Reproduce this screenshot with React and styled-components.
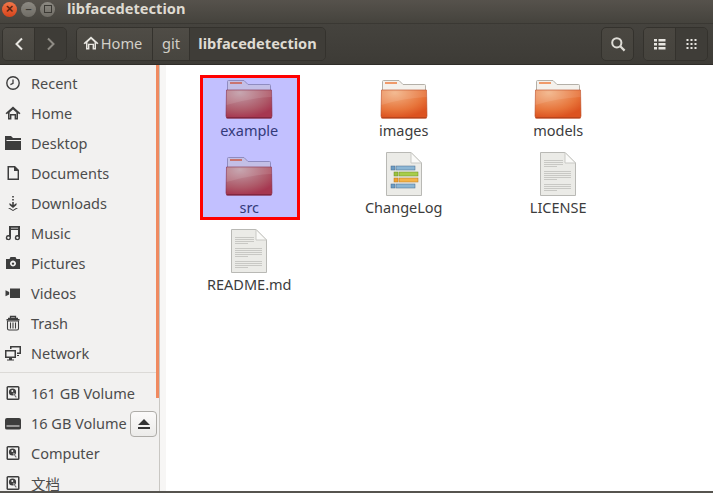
import React from 'react'
import styled, { createGlobalStyle } from 'styled-components'

const Global = createGlobalStyle`
  html, body { margin: 0; padding: 0; background: #fff; }
  body { font-family: "Noto Sans", "Open Sans", "Noto Sans CJK SC", sans-serif; }
`

const Glyphs = {
  recent: <><circle cx="8" cy="8" r="6.2" fill="none" stroke="#3d3d3d" strokeWidth="1.4" /><path d="M8 4.5V8.4L5.4 9.6" fill="none" stroke="#3d3d3d" strokeWidth="1.3" /></>,
  home: <path d="M8 1.5 15.5 8.2 14.2 9.2 13 8.2V14.5H9.6V10.5H6.4V14.5H3V8.2L1.8 9.2.5 8.2ZM8 4.4 4.6 7.4V12.9H5V9H11V12.9H11.4V7.4Z" fill="#3d3d3d" fillRule="evenodd" />,
  desktop: <path d="M0 1H6L8 3H16V15H0ZM1.5 5H16V6H1.5Z" fill="#3d3d3d" fillRule="evenodd" />,
  documents: <path d="M2.5 1H10L14 5V15H2.5ZM4 2.6V13.5H12.6V6H9V2.6Z" fill="#3d3d3d" fillRule="evenodd" />,
  downloads: <path d="M7.2 1H8.8V2.6H7.2ZM7.2 4H8.8V5.6H7.2ZM7.2 7H8.8V10L11.5 8V10L8 13 4.5 10V8L7.2 10ZM3 13H5L8 15H8L11 13H13L8 16Z" fill="#3d3d3d" />,
  music: <path d="M4 1H15V12.5A2.6 2.6 0 1 1 13 10V5H6V12.5A2.6 2.6 0 1 1 4 10ZM6 2.8V3.6H13V2.8ZM3.4 11.5A1.2 1.2 0 1 0 3.41 11.5ZM12.4 11.5A1.2 1.2 0 1 0 12.41 11.5Z" fill="#3d3d3d" fillRule="evenodd" />,
  pictures: <path d="M1 4H4.5L5.5 2H10.5L11.5 4H15V14H1ZM8 5.5A3 3 0 1 0 8.01 5.5ZM8 7.4A1.2 1.2 0 1 1 7.99 7.4Z" fill="#3d3d3d" fillRule="evenodd" />,
  videos: <path d="M5 3.5H15V13H5ZM.5 5.2 4.2 7V9.5L.5 11.3Z" fill="#3d3d3d" />,
  trash: <><path d="M3 3.5H13M5.5 3V1.5H10.5V3" fill="none" stroke="#3d3d3d" strokeWidth="1.3" /><rect x="1.5" y="4" width="13" height="1.5" fill="#3d3d3d" /><path d="M2.5 6H13.5V13.5Q13.5 15 12 15H4Q2.5 15 2.5 13.5ZM5.5 7.5V13.5M8 7.5V13.5M10.5 7.5V13.5" fill="none" stroke="#3d3d3d" strokeWidth="1.1" /></>,
  network: <path d="M0 5H11V13H7V14.5H9V15.5H2V14.5H4V13H0ZM1.5 6.5V11.5H9.5V6.5ZM5 1H16V9H12V7.5H14.5V2.5H6.5V4H5ZM12 10H14V11H12Z" fill="#3d3d3d" fillRule="evenodd" />,
  disk: <><rect x="1.5" y="1" width="13" height="14" rx="1.5" fill="#3d3d3d" /><rect x="3" y="2.5" width="10" height="11" fill="#f2f1f0" /><circle cx="7.5" cy="7" r="3.6" fill="#3d3d3d" /><circle cx="7.3" cy="6" r="1" fill="#f2f1f0" /><path d="M8 8.5 10.5 12.5H12L9 8Z" fill="#3d3d3d" stroke="#f2f1f0" strokeWidth=".5" /></>,
  drive: <path d="M2 3H14Q16 3 16 5V13Q16 14.5 14 14.5H2Q0 14.5 0 13V5Q0 3 2 3ZM1.5 10.5V11.5H14.5V10.5Z" fill="#3d3d3d" fillRule="evenodd" />,
}

const places = [
  ['recent', 'Recent'],
  ['home', 'Home'],
  ['desktop', 'Desktop'],
  ['documents', 'Documents'],
  ['downloads', 'Downloads'],
  ['music', 'Music'],
  ['pictures', 'Pictures'],
  ['videos', 'Videos'],
  ['trash', 'Trash'],
  ['network', 'Network'],
]

const volumes = [
  ['disk', '161 GB Volume'],
  ['drive', '16 GB Volume', true],
  ['disk', 'Computer'],
  ['disk', '文档'],
]

const files = [
  ['folder', 'example', true],
  ['orange', 'images'],
  ['orange', 'models'],
  ['folder', 'src', true],
  ['log', 'ChangeLog'],
  ['text', 'LICENSE'],
  ['text', 'README.md'],
]

function FolderIcon({ kind, id }) {
  const top = kind === 'folder' ? '#c3bfe6' : '#f4f1ec'
  const edge = kind === 'folder' ? '#8f8cc0' : '#b4b0a8'
  const tag = kind === 'folder' ? '#c9746f' : '#f09a6a'
  const c1 = kind === 'folder' ? '#c19da8' : '#f2b386'
  const c2 = kind === 'folder' ? '#ae5a69' : '#e7743a'
  const c3 = kind === 'folder' ? '#a63750' : '#dc5320'
  const line = kind === 'folder' ? '#83273f' : '#b9451c'
  return (
    <svg width="48" height="42" viewBox="0 0 48 42">
      <defs>
        <radialGradient id={id} cx="0.3" cy="0.1" r="0.9">
          <stop offset="0" stopColor={c1} />
          <stop offset="0.7" stopColor={c2} />
          <stop offset="1" stopColor={c3} />
        </radialGradient>
      </defs>
      <path d="M2.5 14V3.5Q2.5 2.5 3.5 2.5H19L23 6.5H44.5Q45.5 6.5 45.5 7.5V14" fill={top} stroke={edge} />
      <rect x="5" y="4" width="12" height="2" fill={tag} />
      <path d="M1.5 12H46.5L47 38Q47 40 45 40H3Q1 40 1 38Z" fill={`url(#${id})`} stroke={line} strokeWidth=".6" />
      <path d="M1.5 27Q24 20 46.8 19V12H1.5Z" fill="#fff" opacity=".1" />
      <rect x="1.5" y="39" width="45" height="1.5" fill={line} />
    </svg>
  )
}

function PageIcon({ kind }) {
  const textRows = [5, 7, 9, 11, 16, 18, 20, 22, 24, 29, 31, 33, 35]
  return (
    <svg width="38" height="46" viewBox="0 0 38 46">
      <path d="M1.5 1.5H26L36.5 12V44.5H1.5Z" fill="#ebebe7" stroke="#b9b9b5" />
      <path d="M26 1.5V12H36.5Z" fill="#fafaf8" stroke="#c9c9c5" />
      {kind === 'text' && textRows.map((y) => (
        <rect key={y} x="5" y={y + 4} width={y === 11 || y === 24 || y === 35 ? 13 : y < 10 ? 19 : 27} height="1" fill="#c8c8c4" />
      ))}
      {kind === 'log' && (
        <>
          <rect x="6" y="15" width="4" height="4" fill="#6d9dc4" stroke="#44688a" strokeWidth=".5" />
          <rect x="11" y="15" width="19" height="4" fill="#8cb6d4" stroke="#44688a" strokeWidth=".5" />
          <rect x="9" y="21" width="4" height="4" fill="#9ac13e" stroke="#6b8c22" strokeWidth=".5" />
          <rect x="14" y="21" width="19" height="4" fill="#a8cd4b" stroke="#6b8c22" strokeWidth=".5" />
          <rect x="9" y="27" width="4" height="4" fill="#f0a030" stroke="#b5741a" strokeWidth=".5" />
          <rect x="14" y="27" width="19" height="4" fill="#f4b348" stroke="#b5741a" strokeWidth=".5" />
          <rect x="6" y="33" width="4" height="4" fill="#6d9dc4" stroke="#44688a" strokeWidth=".5" />
          <rect x="11" y="33" width="19" height="4" fill="#8cb6d4" stroke="#44688a" strokeWidth=".5" />
        </>
      )}
    </svg>
  )
}

function Glyph({ name, size = 16 }) {
  return <svg width={size} height={size} viewBox="0 0 16 16">{Glyphs[name]}</svg>
}

export default function App() {
  return (
    <Window>
      <Global />
      <TitleBar>
        <WinButtons>
          <CloseBtn>×</CloseBtn>
          <WinBtn>–</WinBtn>
          <WinBtn><Square /></WinBtn>
        </WinButtons>
        <Title>libfacedetection</Title>
      </TitleBar>
      <Toolbar>
        <Group>
          <NavBtn>
            <svg width="10" height="14" viewBox="0 0 10 14"><path d="M8 1.5 2.5 7 8 12.5" fill="none" stroke="#e8e6e1" strokeWidth="2" /></svg>
          </NavBtn>
          <NavBtn $dim>
            <svg width="10" height="14" viewBox="0 0 10 14"><path d="M2 1.5 7.5 7 2 12.5" fill="none" stroke="#8f8c85" strokeWidth="2" /></svg>
          </NavBtn>
        </Group>
        <Path>
          <Crumb $w={75}>
            <HomeIcon width="16" height="14" viewBox="0 0 16 14"><path d="M8 .5 15.5 7.2 14.2 8.3 13 7.3V13.5H9.6V9H6.4V13.5H3V7.3L1.8 8.3.5 7.2ZM8 3 4.5 6.2V12H5V7.8H11V12H11.5V6.2Z" fill="#e8e6e1" fillRule="evenodd" /></HomeIcon>
            Home
          </Crumb>
          <Crumb $w={37}>git</Crumb>
          <Crumb $w={136} $current>libfacedetection</Crumb>
        </Path>
        <Spacer />
        <SearchBtn>
          <svg width="16" height="16" viewBox="0 0 16 16"><circle cx="6.8" cy="6.8" r="4.6" fill="none" stroke="#dedcd6" strokeWidth="2" /><path d="M10 10 14.6 14.6" stroke="#dedcd6" strokeWidth="2.2" /></svg>
        </SearchBtn>
        <ViewGroup>
          <ViewBtn>
            <svg width="12" height="12" viewBox="0 0 12 12" fill="#e8e6e1"><rect y="1" width="3" height="2.5" /><rect x="4.5" y="1" width="7" height="2.5" /><rect y="5" width="3" height="2.5" /><rect x="4.5" y="5" width="7" height="2.5" /><rect y="9" width="3" height="2.5" /><rect x="4.5" y="9" width="7" height="2.5" /></svg>
          </ViewBtn>
          <ViewBtn $on>
            <svg width="12" height="12" viewBox="0 0 12 12" fill="#e8e6e1">
              {[1, 5, 9].map((y) => [1, 5, 9].map((x) => <rect key={`${x}-${y}`} x={x - 0.5} y={y} width="2" height="2" />))}
            </svg>
          </ViewBtn>
        </ViewGroup>
      </Toolbar>
      <Body>
        <Sidebar>
          <PlaceList>
            {places.map(([icon, label]) => (
              <Place key={label}>
                <Glyph name={icon} />
                <PlaceLabel>{label}</PlaceLabel>
              </Place>
            ))}
          </PlaceList>
          <Divider />
          <VolumeList>
            {volumes.map(([icon, label, eject]) => (
              <Place key={label}>
                <Glyph name={icon} />
                <PlaceLabel>{label}</PlaceLabel>
                {eject && (
                  <EjectBtn>
                    <svg width="14" height="12" viewBox="0 0 14 12"><path d="M7 1 13 7H1Z M1 9H13V11H1Z" fill="#333" /></svg>
                  </EjectBtn>
                )}
              </Place>
            ))}
          </VolumeList>
          <Scroll />
        </Sidebar>
        <Gutter />
        <Content>
          <Grid>
            {files.map(([kind, label, selected]) => (
              <File key={label}>
                <IconSlot>
                  {kind === 'log' || kind === 'text'
                    ? <PageIcon kind={kind} />
                    : <FolderIcon kind={kind} id={`grad-${label}`} />}
                </IconSlot>
                <FileLabel $selected={selected}>{label}</FileLabel>
              </File>
            ))}
          </Grid>
          <Selection />
        </Content>
      </Body>
      <BottomEdge />
    </Window>
  )
}

const Window = styled.div`
  width: 713px;
  height: 493px;
  display: flex;
  flex-direction: column;
  overflow: hidden;
  position: relative;
`
const TitleBar = styled.div`
  height: 23px;
  flex: none;
  box-sizing: border-box;
  padding-bottom: 5px;
  display: flex;
  align-items: center;
  background: linear-gradient(#56524c, #45433d);
`
const WinButtons = styled.div`
  display: flex;
  gap: 4px;
  padding-left: 2px;
  width: 65px;
  box-sizing: border-box;
`
const WinBtn = styled.div`
  width: 15px;
  height: 15px;
  border-radius: 50%;
  background: linear-gradient(#8d8a83, #6f6c65);
  color: #3b3934;
  font: bold 11px/14px "Liberation Sans", sans-serif;
  display: flex;
  align-items: center;
  justify-content: center;
`
const CloseBtn = styled(WinBtn)`
  background: linear-gradient(#f2774a, #d6441c);
  color: #5a2410;
  font-size: 13px;
`
const Square = styled.div`
  width: 6px;
  height: 6px;
  border: 1px solid #3b3934;
`
const Title = styled.div`
  padding-left: 2px;
  margin-bottom: 2px;
  color: #dfdbd2;
  font-size: 14.6px;
  font-weight: 700;
  line-height: 16px;
`
const Toolbar = styled.div`
  height: 42px;
  flex: none;
  box-sizing: border-box;
  padding: 3px 5px 4px 2px;
  display: flex;
  align-items: flex-start;
  background: linear-gradient(#45433e, #3d3b36);
  border-top: 1px solid #3a3833;
  border-bottom: 1px solid #2f2d29;
`
const Group = styled.div`
  display: flex;
  height: 32px;
  border: 1px solid #34322d;
  border-radius: 5px;
  overflow: hidden;
`
const NavBtn = styled.div`
  width: 31px;
  display: flex;
  align-items: center;
  justify-content: center;
  background: ${(p) => (p.$dim ? '#3e3c37' : 'linear-gradient(#4f4c46, #47453f)')};
  border-left: ${(p) => (p.$dim ? '1px solid #34322d' : 'none')};
`
const Path = styled(Group)`
  margin-left: 9px;
`
const Crumb = styled.div`
  width: ${(p) => p.$w}px;
  box-sizing: border-box;
  padding-bottom: 2px;
  display: flex;
  align-items: center;
  justify-content: center;
  font-size: 14.6px;
  font-weight: ${(p) => (p.$current ? 700 : 400)};
  color: ${(p) => (p.$current ? '#dfdbd2' : '#d3d0c8')};
  background: ${(p) => (p.$current ? '#3f3d38' : 'linear-gradient(#4f4c46, #47453f)')};
  & + & { border-left: 1px solid #34322d; }
`
const HomeIcon = styled.svg`
  margin: 0 2px 0 -4px;
`
const Spacer = styled.div`
  flex: 1;
`
const SearchBtn = styled(Group)`
  width: 31px;
  align-items: center;
  justify-content: center;
  background: linear-gradient(#4a4741, #45433d);
`
const ViewGroup = styled(Group)`
  margin-left: 9px;
`
const ViewBtn = styled.div`
  width: 31px;
  display: flex;
  align-items: center;
  justify-content: center;
  background: ${(p) => (p.$on ? '#3f3d38' : 'linear-gradient(#4a4741, #45433d)')};
  border-left: ${(p) => (p.$on ? '1px solid #34322d' : 'none')};
`
const Body = styled.div`
  flex: 1;
  display: flex;
  min-height: 0;
`
const Sidebar = styled.div`
  width: 160px;
  flex: none;
  box-sizing: border-box;
  padding-top: 3px;
  background: #f2f1f0;
  border-right: 1px solid #c9c7c3;
  position: relative;
  overflow: hidden;
`
const PlaceList = styled.div`
  display: flex;
  flex-direction: column;
`
const VolumeList = styled(PlaceList)``
const Place = styled.div`
  height: 30px;
  flex: none;
  display: flex;
  align-items: center;
  padding-left: 5px;
  position: relative;
`
const PlaceLabel = styled.span`
  margin-left: 10px;
  color: #4c4c4c;
  font-size: 14.5px;
  white-space: nowrap;
`
const Divider = styled.div`
  height: 1px;
  margin: 4px 0 5px;
  background: #dcdad7;
`
const EjectBtn = styled.div`
  position: absolute;
  left: 130px;
  top: 3px;
  width: 27px;
  height: 26px;
  box-sizing: border-box;
  border: 1px solid #aeaca8;
  border-radius: 4px;
  background: linear-gradient(#fbfafa, #ecebe9);
  display: flex;
  align-items: center;
  justify-content: center;
`
const Scroll = styled.div`
  position: absolute;
  right: 0;
  top: 0;
  width: 3px;
  height: 333px;
  background: #f08a60;
`
const Gutter = styled.div`
  width: 6px;
  flex: none;
  background: #f7f6f5;
`
const Content = styled.div`
  flex: 1;
  position: relative;
  background: #fff;
`
const Grid = styled.div`
  display: grid;
  grid-template-columns: repeat(3, 154.5px);
  grid-auto-rows: 77px;
  padding: 12px 0 0 6px;
  position: relative;
  z-index: 1;
`
const File = styled.div`
  display: flex;
  flex-direction: column;
  align-items: center;
`
const IconSlot = styled.div`
  height: 43px;
  display: flex;
  align-items: flex-end;
  justify-content: center;
`
const FileLabel = styled.div`
  margin-top: 1px;
  font-size: 14.5px;
  line-height: 19px;
  color: ${(p) => (p.$selected ? '#333a7a' : '#3c3c3c')};
`
const Selection = styled.div`
  position: absolute;
  left: 34px;
  top: 10px;
  width: 100px;
  height: 145px;
  box-sizing: border-box;
  border: 3px solid #f00;
  background: #c2c0ff;
`
const BottomEdge = styled.div`
  position: absolute;
  left: 0;
  right: 0;
  bottom: 0;
  height: 2px;
  background: #56544f;
`
